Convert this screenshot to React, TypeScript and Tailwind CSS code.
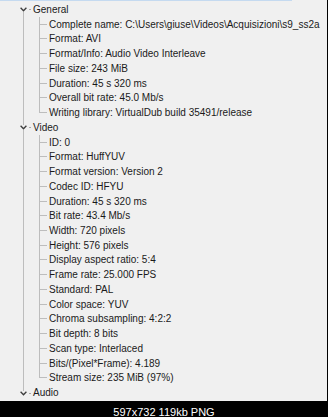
import React from "react"

const sections = [
    {
        name: "General",
        items: [
            "Complete name: C:\\Users\\giuse\\Videos\\Acquisizioni\\s9_ss2a",
            "Format: AVI",
            "Format/Info: Audio Video Interleave",
            "File size: 243 MiB",
            "Duration: 45 s 320 ms",
            "Overall bit rate: 45.0 Mb/s",
            "Writing library: VirtualDub build 35491/release",
        ],
    },
    {
        name: "Video",
        items: [
            "ID: 0",
            "Format: HuffYUV",
            "Format version: Version 2",
            "Codec ID: HFYU",
            "Duration: 45 s 320 ms",
            "Bit rate: 43.4 Mb/s",
            "Width: 720 pixels",
            "Height: 576 pixels",
            "Display aspect ratio: 5:4",
            "Frame rate: 25.000 FPS",
            "Standard: PAL",
            "Color space: YUV",
            "Chroma subsampling: 4:2:2",
            "Bit depth: 8 bits",
            "Scan type: Interlaced",
            "Bits/(Pixel*Frame): 4.189",
            "Stream size: 235 MiB (97%)",
        ],
    },
    { name: "Audio", items: [] as string[] },
]

function Chevron() {
    return (
        <svg width="7" height="5" viewBox="0 0 7 5" className="shrink-0">
            <polyline points="0.6,0.8 3.5,3.8 6.4,0.8" fill="none" stroke="#3c3c3c" strokeWidth="1.3" />
        </svg>
    )
}

function RootRow({ name, first, last }: { name: string; first: boolean; last: boolean }) {
    return (
        <div className="flex h-[14.74px]">
            {/* expander with sibling line */}
            <div className="ml-[20px] flex w-[7px] shrink-0 flex-col items-center">
                <div className={`w-px flex-1 ${first ? "" : "bg-[#bdbdbd]"}`} />
                <Chevron />
                <div className={`w-px flex-1 ${last ? "" : "bg-[#bdbdbd]"}`} />
            </div>
            <div className="flex shrink-0 items-center">
                <div className="ml-[2px] h-px w-[2px] bg-[#a8a8a8]" />
            </div>
            <span className="ml-[2px] self-center leading-[12px]">{name}</span>
        </div>
    )
}

function ChildRow({ text, last }: { text: string; last: boolean }) {
    return (
        <div className="flex h-[14.74px]">
            <div className="ml-[23px] w-[16px] shrink-0 border-l border-[#bdbdbd]" />
            <div className="flex w-[8px] shrink-0 flex-col">
                <div className="h-1/2 border-b border-l border-[#bdbdbd]" />
                {!last && <div className="flex-1 border-l border-[#bdbdbd]" />}
            </div>
            <span className="ml-[2px] shrink-0 self-center leading-[12px]">{text}</span>
        </div>
    )
}

export default function App() {
    return (
        <div className="flex h-[417px] w-[328px] flex-col overflow-hidden bg-black font-['Liberation_Sans',Arial,sans-serif]">
            <div className="flex h-[401px] shrink-0">
                <div className="w-[327px] overflow-hidden whitespace-nowrap bg-[#f0f0f0] text-[10px] text-[#1a1a1a]">
                    <div className="h-px w-[292px] bg-[#c5daf0]" />
                    <div className="pt-[1.6px]">
                        {sections.map((s, i) => (
                            <div key={s.name}>
                                <RootRow name={s.name} first={i === 0} last={i === sections.length - 1} />
                                {s.items.map((t, j) => (
                                    <ChildRow key={j} text={t} last={j === s.items.length - 1} />
                                ))}
                            </div>
                        ))}
                    </div>
                </div>
            </div>
            <div className="flex justify-center pt-[5px] text-[11px] leading-[12px] text-white">
                597x732 119kb PNG
            </div>
        </div>
    )
}
